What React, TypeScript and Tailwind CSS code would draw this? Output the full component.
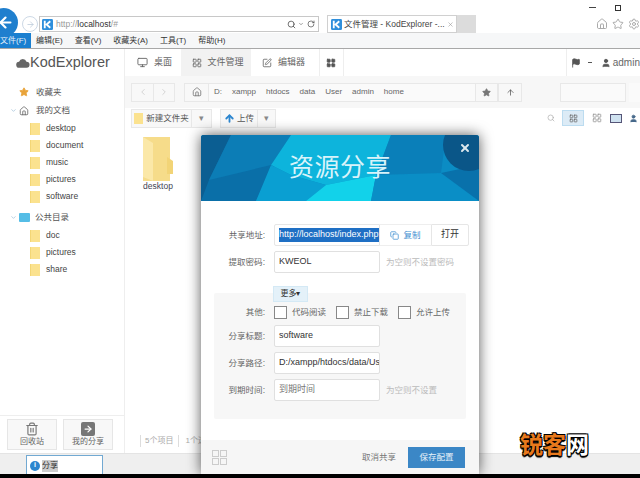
import { ArrowLeft, ArrowRight, ArrowUp, ChevronDown, ChevronLeft, ChevronRight, Copy, Flag, Home, LayoutGrid, Monitor, PenSquare, RotateCw, Search, Settings, Star, Trash2, User, X } from "lucide-react";

const SANS = "font-['Liberation_Sans','Noto_Sans_CJK_SC',sans-serif]";

const docs = ["desktop", "document", "music", "pictures", "software"];
const shared = ["doc", "pictures", "share"];
const menus = ["编辑(E)", "查看(V)", "收藏夹(A)", "工具(T)", "帮助(H)"];
const crumbs = ["D:", "xampp", "htdocs", "data", "User", "admin", "home"];

function KLogo({ size }: { size: string }) {
  return (
    <svg viewBox="0 0 12 12" className={size}>
      <rect width="12" height="12" rx="1.5" fill="#2f8fdc" />
      <path d="M3 2v8M9 2.5 5 6l4 3.5" fill="none" stroke="#fff" strokeWidth="2" />
    </svg>
  );
}

function TreeFolder({ name }: { name: string }) {
  return (
    <div className="flex h-[17px] items-center pl-[30px]">
      <span className="h-[12px] w-[10px] border-l border-[#f3d676] bg-[#fbe28f]" />
      <span className="ml-[6px] text-[8.5px] text-[#444]">{name}</span>
    </div>
  );
}

function ToolButton({ children, className = "" }: { children: React.ReactNode; className?: string }) {
  return <div className={`flex h-[19px] items-center justify-center border border-[#e8e8e8] bg-[#f8f8f8] text-[8.5px] text-[#555] ${className}`}>{children}</div>;
}

function Field({ label, children, hint }: { label: string; children: React.ReactNode; hint?: string }) {
  return (
    <div className="flex h-[22px] items-center">
      <span className="w-[66px] pr-[2px] text-right text-[8.5px] text-[#666]">{label}:</span>
      <div className="ml-[7px] flex h-[22px] w-[106px] items-center overflow-hidden whitespace-nowrap rounded-[2px] border border-[#e0e0e0] bg-white px-[4px] text-[9px] text-[#333]">
        {children}
      </div>
      {hint && <span className="ml-[6px] text-[8.5px] text-[#bbb]">{hint}</span>}
    </div>
  );
}

function Check({ label }: { label: string }) {
  return (
    <div className="flex items-center">
      <span className="h-[13px] w-[13px] border border-[#888] bg-white" />
      <span className="ml-[5px] text-[8.5px] text-[#666]">{label}</span>
    </div>
  );
}

function ShareDialog() {
  return (
    <div className="absolute left-[201px] top-[135px] flex h-[339px] w-[278px] flex-col overflow-hidden rounded-t-[3px] bg-white shadow-[0_0_14px_rgba(0,0,0,0.65)]">
      <div className="relative flex h-[66px] shrink-0 items-center justify-center bg-[#0a9ad0]">
        <svg viewBox="0 0 278 66" className="absolute inset-0 h-full w-full">
          <rect width="278" height="66" fill="#0b8cc4" />
          <polygon points="0,0 90,0 55,66 0,66" fill="#0a6fa8" />
          <polygon points="0,0 30,0 8,45 0,66" fill="#0b5e92" />
          <polygon points="30,0 90,0 70,30 8,45" fill="#0c7db6" />
          <polygon points="90,0 190,0 175,40 125,50 90,40 70,30" fill="#0db4dc" />
          <polygon points="70,30 90,40 125,50 105,66 55,66" fill="#0a9fd2" />
          <polygon points="125,50 175,40 170,66 105,66" fill="#12d2ea" />
          <polygon points="175,40 240,38 278,66 170,66" fill="#0a8ec6" />
          <polygon points="190,0 245,0 240,38 175,40" fill="#0a7fb9" />
          <polygon points="240,38 278,30 278,66" fill="#0971ab" />
          <circle cx="268" cy="10" r="26" fill="#0a5688" />
        </svg>
        <span className="relative text-[25px] tracking-[0.5px] text-[#d8f3fa]">资源分享</span>
        <X className="absolute right-[8px] top-[7px] h-[12px] w-[12px] text-[#dce8ee]" strokeWidth={4} />
      </div>
      <div className="flex flex-1 flex-col pt-[23px]">
        <div className="flex h-[22px] items-center">
          <span className="w-[66px] pr-[2px] text-right text-[8.5px] text-[#666]">共享地址:</span>
          <div className="ml-[7px] flex h-[22px] w-[106px] items-center overflow-hidden whitespace-nowrap rounded-l-[2px] border border-[#e6e6e6] bg-white px-[4px] text-[9px]">
            <span className="bg-[#1f6fc4] text-white">http://localhost/index.php?</span>
          </div>
          <div className="flex h-[22px] w-[51px] items-center justify-center gap-[4px] border-y border-[#eee] text-[8.5px] text-[#3f8fd0]">
            <Copy className="h-[9px] w-[9px]" />
            复制
          </div>
          <div className="flex h-[22px] w-[38px] items-center justify-center rounded-r-[2px] border border-[#e6e6e6] text-[9px] text-[#333]">打开</div>
        </div>
        <div className="mt-[5px]">
          <Field label="提取密码" hint="为空则不设置密码">KWEOL</Field>
        </div>
        <div className="relative mt-[20px] mx-[13px] flex h-[126px] flex-col rounded-[2px] bg-[#f7f7f7] pt-[11px]">
          <div className="absolute left-[59px] top-[-7px] flex h-[16px] w-[35px] items-center justify-center border border-[#d4e9f5] bg-[#e4f1f9] text-[8px] text-[#333]">
            更多▾
          </div>
          <div className="-ml-[13px] flex h-[17px] items-center">
            <span className="w-[66px] pr-[2px] text-right text-[8.5px] text-[#666]">其他:</span>
            <div className="ml-[7px] flex gap-[10px]">
              <Check label="代码阅读" />
              <Check label="禁止下载" />
              <Check label="允许上传" />
            </div>
          </div>
          <div className="-ml-[13px] mt-[4px] flex flex-col gap-[5px]">
            <Field label="分享标题">software</Field>
            <Field label="分享路径">D:/xampp/htdocs/data/User/admin</Field>
            <Field label="到期时间" hint="为空则不设置">
              <span className="text-[#777]">到期时间</span>
            </Field>
          </div>
        </div>
        <div className="mt-auto flex h-[34px] items-center bg-[#f6f6f6] pl-[11px] pr-[14px]">
          <div className="grid grid-cols-2 gap-[1px]">
            {[0, 1, 2, 3].map((n) => (
              <span key={n} className="h-[7px] w-[7px] border border-[#ccc]" />
            ))}
          </div>
          <span className="ml-auto text-[8.5px] text-[#777]">取消共享</span>
          <button className="ml-[12px] h-[21px] w-[57px] bg-[#3b87c6] text-[8.5px] text-[#e8f2fa]">保存配置</button>
        </div>
      </div>
    </div>
  );
}

export default function App() {
  return (
    <div className={`relative flex h-[478px] w-[640px] flex-col overflow-hidden bg-white ${SANS}`}>
      {/* window buttons */}
      <div className="flex h-[15px] shrink-0 items-start justify-end gap-[19px] pr-[19px] pt-[5px]">
        <span className="mt-[2px] h-[1px] w-[7px] bg-[#444]" />
        <span className="h-[6px] w-[6px] border border-[#333]" />
      </div>

      {/* address row */}
      <div className="flex h-[18px] shrink-0 items-center">
        <div className="relative z-10 -mt-[3px] flex h-[29px] w-[29px] shrink-0 -translate-x-[11px] items-center justify-center rounded-full bg-[#1f7fce]">
          <ArrowLeft className="ml-[4px] h-[17px] w-[17px] text-white" strokeWidth={3} />
        </div>
        <div className="-ml-[7px] flex h-[16px] w-[16px] shrink-0 items-center justify-center rounded-full border border-[#cdd9e6]">
          <ArrowRight className="h-[9px] w-[9px] text-[#b8c8d8]" />
        </div>
        <div className="ml-[1px] flex h-[16px] w-[280px] shrink-0 items-center border border-[#c8c8c8] pl-[2px] text-[8.5px] text-[#999]">
          <KLogo size="h-[11px] w-[11px]" />
          <span className="ml-[3px]">http://<span className="text-[#333]">localhost</span>/#</span>
          <Search className="ml-auto h-[9px] w-[9px] text-[#444]" />
          <ChevronDown className="ml-[2px] h-[6px] w-[6px] text-[#444]" />
          <RotateCw className="mx-[3px] h-[8px] w-[8px] text-[#444]" />
        </div>
        <div className="ml-[8px] flex h-[18px] w-[130px] shrink-0 items-center border border-[#d0d0d0] pl-[3px] text-[8.5px] text-[#444]">
          <KLogo size="h-[11px] w-[11px] shrink-0" />
          <span className="ml-[2px] whitespace-nowrap">文件管理 - KodExplorer -...</span>
          <X className="ml-auto mr-[2px] h-[7px] w-[7px] text-[#999]" />
        </div>
        <div className="h-[18px] w-[19px] shrink-0 bg-[#dcdcdc]" />
        <div className="ml-auto flex gap-[4px] pr-[0px] text-[#aaa]">
          <Home className="h-[12px] w-[12px]" />
          <Star className="h-[12px] w-[12px]" />
          <Settings className="h-[12px] w-[12px]" />
        </div>
      </div>

      {/* menu row */}
      <div className="flex h-[16px] shrink-0 items-center border-b border-[#a8a8a8] bg-[#f6f7f8] text-[8px] text-[#333]">
        <div className="flex h-[15px] w-[31px] items-center whitespace-nowrap bg-[#1a7fd0] text-[#e6f1fa]">文件(F)</div>
        <div className="ml-[5px] flex gap-[12px]">
          {menus.map((m) => (
            <span key={m}>{m}</span>
          ))}
        </div>
      </div>

      {/* app header */}
      <div className="flex h-[27px] shrink-0 items-center text-[9px] text-[#666]">
        <div className="flex w-[125px] shrink-0 items-center border-r border-[#eee] pl-[16px] text-[14.5px] leading-[27px] text-[#555]">
          <svg viewBox="0 0 16 11" className="h-[10px] w-[14px]">
            <path d="M4 11a3.5 3.5 0 0 1-.5-7A4.5 4.5 0 0 1 12 4a3.5 3.5 0 0 1 0 7Z" fill="#666" />
          </svg>
          KodExplorer
        </div>
        <div className="flex h-[27px] w-[59px] items-center gap-[6px] pl-[12px]">
          <Monitor className="h-[11px] w-[11px]" />
          桌面
        </div>
        <div className="flex h-[27px] w-[75px] items-center gap-[6px] bg-[#f2f2f2] pl-[11px]">
          <LayoutGrid className="h-[10px] w-[10px]" />
          文件管理
        </div>
        <div className="flex h-[27px] w-[73px] items-center gap-[6px] border-r border-[#eee] pl-[11px]">
          <PenSquare className="h-[10px] w-[10px]" />
          编辑器
        </div>
        <div className="flex h-[27px] w-[26px] items-center justify-center border-r border-[#eee]">
          <LayoutGrid className="h-[10px] w-[10px] text-[#555]" fill="#555" />
        </div>
        <div className="ml-[222px] flex h-[27px] shrink-0 items-center border-l border-[#eee] pl-[4px] whitespace-nowrap text-[10px]">
          <Flag className="h-[10px] w-[10px] text-[#555]" fill="#555" />
          <span className="ml-[7px] h-[1px] w-[4px] bg-[#555]" />
          <User className="ml-[9px] h-[10px] w-[10px] text-[#555]" fill="#555" />
          <span className="ml-[2px]">admin</span>
        </div>
      </div>

      {/* body */}
      <div className="flex min-h-0 flex-1">
        <aside className="flex w-[125px] shrink-0 flex-col border-r border-[#eee] pt-[7px]">
          <div className="flex h-[18px] items-center pl-[19px] text-[8.5px] text-[#555]">
            <Star className="h-[10px] w-[10px] text-[#e8a33a]" fill="#e8a33a" />
            <span className="ml-[7px]">收藏夹</span>
          </div>
          <div className="flex h-[19px] items-center pl-[10px] text-[8.5px] text-[#555]">
            <ChevronDown className="h-[7px] w-[7px] text-[#8cb4d0]" />
            <Home className="ml-[2px] h-[10px] w-[10px] text-[#666]" />
            <span className="ml-[7px]">我的文档</span>
          </div>
          {docs.map((d) => (
            <TreeFolder key={d} name={d} />
          ))}
          <div className="mt-[2px] flex h-[20px] items-center pl-[10px] text-[8.5px] text-[#555]">
            <ChevronDown className="h-[7px] w-[7px] text-[#8cb4d0]" />
            <span className="ml-[2px] h-[9px] w-[11px] rounded-[1px] bg-[#55bde6]" />
            <span className="ml-[5px]">公共目录</span>
          </div>
          {shared.map((d) => (
            <TreeFolder key={d} name={d} />
          ))}
          <div className="mt-auto flex h-[38px] gap-[6px] border-t border-[#eee] pl-[7px] pt-[3px]">
            <div className="flex h-[31px] w-[50px] flex-col items-center justify-center border border-[#e6e6e6] bg-[#f8f8f8] text-[8px] text-[#666]">
              <Trash2 className="h-[14px] w-[14px] text-[#777]" />
              回收站
            </div>
            <div className="flex h-[31px] w-[50px] flex-col items-center justify-center border border-[#e6e6e6] bg-[#f8f8f8] text-[8px] text-[#666]">
              <span className="flex h-[14px] w-[14px] items-center justify-center rounded-[2px] bg-[#777]">
                <ArrowRight className="h-[10px] w-[10px] text-white" strokeWidth={3} />
              </span>
              我的分享
            </div>
          </div>
        </aside>

        <main className="flex min-w-0 flex-1 flex-col">
          <div className="flex h-[32px] shrink-0 items-center bg-[#f7f7f7] pl-[6px]">
            <ToolButton className="w-[22px] border-r-0"><ChevronLeft className="h-[10px] w-[10px] text-[#ccc]" /></ToolButton>
            <ToolButton className="w-[22px]"><ChevronRight className="h-[10px] w-[10px] text-[#ccc]" /></ToolButton>
            <ToolButton className="ml-[9px] w-[25px]"><Home className="h-[10px] w-[10px] text-[#777]" /></ToolButton>
            <div className="flex h-[19px] w-[266px] items-center border-y border-[#e8e8e8] bg-[#fafafa] pl-[5px] text-[8px] text-[#666]">
              {crumbs.map((c) => (
                <span key={c} className="mr-[10px]">{c}</span>
              ))}
            </div>
            <ToolButton className="w-[23px]"><Star className="h-[9px] w-[9px] text-[#777]" fill="#777" /></ToolButton>
            <ToolButton className="w-[24px]"><ArrowUp className="h-[9px] w-[9px] text-[#555]" /></ToolButton>
            <div className="ml-[38px] h-[19px] w-[66px] border border-[#e8e8e8] bg-[#fafafa]" />
            <span className="ml-[3px] h-[19px] flex-1 bg-[#fafafa]" />
          </div>
          <div className="flex h-[20px] shrink-0 items-center pl-[6px] pr-[2px]">
            <ToolButton className="w-[61px] gap-[3px]">
              <span className="h-[11px] w-[9px] bg-[#fbe28f]" />
              新建文件夹
            </ToolButton>
            <ToolButton className="w-[20px] border-l-0 text-[#888]">▾</ToolButton>
            <ToolButton className="ml-[8px] w-[38px] gap-[2px]">
              <ArrowUp className="h-[11px] w-[11px] text-[#2c86cf]" strokeWidth={4} />
              上传
            </ToolButton>
            <ToolButton className="w-[18px] border-l-0 text-[#888]">▾</ToolButton>
            <div className="ml-auto flex items-center gap-[7px]">
              <Search className="h-[8px] w-[8px] text-[#aaa]" />
              <span className="flex h-[16px] w-[22px] items-center justify-center border border-[#bcdcf0] bg-[#dcebf6]">
                <LayoutGrid className="h-[9px] w-[9px] text-[#666]" />
              </span>
              <LayoutGrid className="h-[10px] w-[12px] text-[#999]" />
              <span className="h-[9px] w-[12px] border border-[#557] bg-[#cfe2f0]" />
              <User className="h-[9px] w-[9px] text-[#46688a]" fill="#46688a" />
            </div>
          </div>
          <div className="flex min-h-0 flex-1 flex-col justify-between pl-[15px]">
            <div className="mt-[9px] flex w-[36px] flex-col items-center">
              <svg viewBox="0 0 30 44" className="h-[44px] w-[30px]">
                <path d="M0 0h27v44H0Z" fill="#f6dc8a" />
                <path d="M0 0l10 6v38L0 40Z" fill="#fbe8a8" />
                <path d="M24 20l6 4v13h-6Z" fill="#f2d477" />
              </svg>
              <span className="-mt-[1px] text-[8.5px] text-[#445]">desktop</span>
            </div>
            <div className="mb-[6px] flex whitespace-nowrap text-[8px] text-[#aaa]">
              <span className="border-l border-[#ddd] pl-[4px]">5个项目</span>
              <span className="ml-[5px] border-l border-[#ddd] pl-[6px]">1个选中</span>
            </div>
          </div>
        </main>
      </div>

      {/* bottom bar */}
      <div className="flex h-[21px] shrink-0 items-start border-t border-[#e4e4e4] bg-[#efefef] pl-[26px] pt-[1px]">
        <div className="flex h-[20px] w-[77px] items-center border-x border-t border-[#72a9d2] bg-white pl-[3px] text-[8px] text-[#333]">
          <span className="flex h-[10px] w-[10px] items-center justify-center rounded-full bg-[#2c86cf] text-[7px] font-bold text-white">i</span>
          <span className="ml-[2px] bg-[#ccc]">分享</span>
        </div>
      </div>
      <div className="h-[4px] shrink-0 bg-black" />

      <ShareDialog />

      {/* watermark */}
      <div className="absolute left-[520px] top-[432px] whitespace-nowrap text-[23px] font-bold leading-[26px] text-[#e8791c] [text-shadow:1px_1px_0_#000,-1px_-1px_0_#000,1px_-1px_0_#000,-1px_1px_0_#000,0_2px_1px_#000]">
        锐客<span className="text-white">网</span>
      </div>
    </div>
  );
}
